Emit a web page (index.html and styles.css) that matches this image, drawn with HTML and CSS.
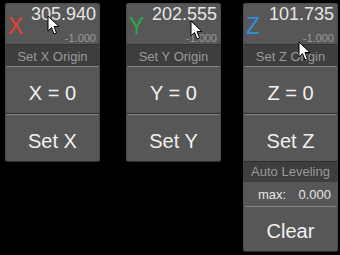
FILE: index.html
```html
<!DOCTYPE html>
<html lang="en">
  <head>
    <meta charset="UTF-8" />
    <title>Axes</title>
    <link rel="stylesheet" href="styles.css">
  </head>
  <body>
    <div class="axes">
      <div class="axis axis-x">
        <div class="readout">
          <span class="letter">X</span>
          <div class="values">
            <div class="pos">305.940</div>
            <div class="offset">-1.000</div>
          </div>
        </div>
        <div class="band">Set X Origin</div>
        <button class="btn">X = 0</button>
        <button class="btn">Set X</button>
      </div>

      <div class="axis axis-y">
        <div class="readout">
          <span class="letter">Y</span>
          <div class="values">
            <div class="pos">202.555</div>
            <div class="offset">-1.000</div>
          </div>
        </div>
        <div class="band">Set Y Origin</div>
        <button class="btn">Y = 0</button>
        <button class="btn">Set Y</button>
      </div>

      <div class="axis axis-z">
        <div class="readout">
          <span class="letter">Z</span>
          <div class="values">
            <div class="pos">101.735</div>
            <div class="offset">-1.000</div>
          </div>
        </div>
        <div class="band">Set Z Origin</div>
        <button class="btn">Z = 0</button>
        <button class="btn">Set Z</button>
        <div class="band band-sub">Auto Leveling</div>
        <div class="max-row"><span>max:</span><span>0.000</span></div>
        <button class="btn btn-clear">Clear</button>
      </div>
    </div>

    <!-- mouse pointers captured in the screenshot -->
    <svg class="cursor c1" width="14" height="21" viewBox="0 0 14 21"><path d="M1 1 L1 16 L4.5 12.5 L7 19 L9.5 18 L7 11.5 L12 11.5 Z" fill="#fff" stroke="#000" stroke-width="1"/></svg>
    <svg class="cursor c2" width="14" height="21" viewBox="0 0 14 21"><path d="M1 1 L1 16 L4.5 12.5 L7 19 L9.5 18 L7 11.5 L12 11.5 Z" fill="#fff" stroke="#000" stroke-width="1"/></svg>
    <svg class="cursor c3" width="14" height="21" viewBox="0 0 14 21"><path d="M1 1 L1 16 L4.5 12.5 L7 19 L9.5 18 L7 11.5 L12 11.5 Z" fill="#fff" stroke="#000" stroke-width="1"/></svg>
  </body>
</html>
```

FILE: styles.css
```css
* {
  margin: 0;
  padding: 0;
  box-sizing: border-box;
  font-family: "Liberation Sans", Arial, sans-serif;
}

body {
  background-color: #000;
  width: 340px;
  height: 255px;
  overflow: hidden;
  position: relative;
}

.axes {
  display: flex;
  align-items: flex-start;
  padding-top: 3px;
}

.axis {
  width: 95px;
  display: flex;
  flex-direction: column;
  background-color: #3e3e3e;
  border-radius: 3px;
}

.axis-x {
  margin-left: 5px;
}

.axis-y {
  margin-left: 26px;
}

.axis-z {
  margin-left: 22px;
}

.readout {
  height: 42px;
  background-color: #575757;
  border: 1px solid #4c4c4c;
  border-bottom-color: #333;
  border-radius: 3px;
  display: flex;
  align-items: flex-start;
  padding: 1px 3px 0 2px;
}

.letter {
  font-size: 23px;
  line-height: 23px;
  margin-top: 10px;
}

.axis-x .letter { color: #e8412f; }
.axis-y .letter { color: #2aa84a; }
.axis-z .letter { color: #2d8fdc; }

.values {
  flex: 1;
  text-align: right;
}

.pos {
  font-size: 18px;
  line-height: 18px;
  color: #e6e6e6;
}

.offset {
  font-size: 11px;
  line-height: 12px;
  color: #9a9a9a;
  margin-top: 9px;
}

.band {
  height: 21px;
  padding-top: 3px;
  line-height: 18px;
  text-align: center;
  font-size: 13px;
  color: #9a9a9a;
}

.band-sub {
  height: 20px;
  padding-top: 1px;
}

.btn {
  height: 48px;
  padding-top: 6px;
  background-color: #575757;
  color: #f0f0f0;
  font-size: 20px;
  border: 1px solid #4a4a4a;
  border-top-color: #858585;
  border-bottom-color: #2e2e2e;
  border-radius: 3px;
}

.btn-clear {
  height: 46px;
  padding-top: 4px;
}

.max-row {
  height: 24px;
  background-color: #575757;
  display: flex;
  justify-content: space-between;
  align-items: center;
  padding: 0 7px 0 15px;
  font-size: 13px;
  color: #e6e6e6;
}

.cursor {
  position: absolute;
}

.c1 { left: 47px; top: 15px; }
.c2 { left: 190px; top: 20px; }
.c3 { left: 298px; top: 41px; }
```
